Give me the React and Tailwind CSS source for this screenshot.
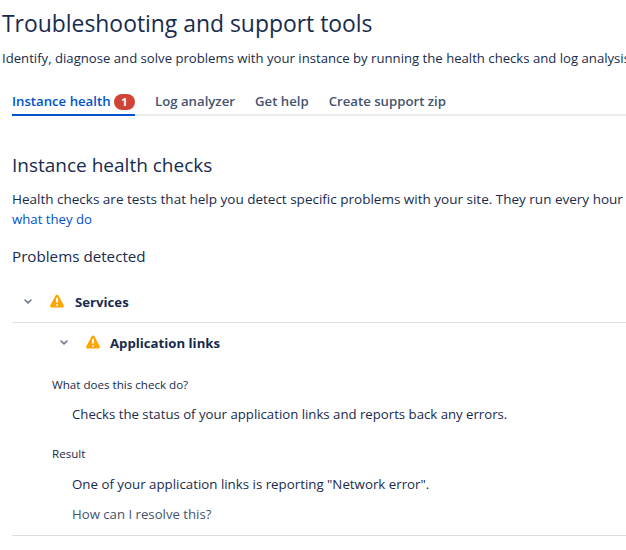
import React from "react";

const Warn = () => (
  <svg width="16" height="16" viewBox="0 0 16 16" className="shrink-0">
    <path d="M6.7 2.2 1.3 12.2c-.6 1.1.2 2.3 1.3 2.3h10.8c1.1 0 1.9-1.2 1.3-2.3L9.3 2.2c-.6-1.1-2-1.1-2.6 0z" fill="#ffa500" />
    <rect x="7" y="4.8" width="2" height="5" rx="1" fill="#ffffff" />
    <circle cx="8" cy="12" r="1.1" fill="#ffffff" />
  </svg>
);
const Chev = () => (
  <svg width="16" height="16" viewBox="0 0 16 16" className="shrink-0">
    <path d="M5 7l3 2.8L11 7" fill="none" stroke="#6b778c" strokeWidth="1.6" strokeLinecap="round" strokeLinejoin="round" />
  </svg>
);

export default function App() {
  return (
    <div className="w-[626px] h-[550px] overflow-hidden bg-white text-[#172b4d] text-[13.2px] font-['Open_Sans','Noto_Sans',sans-serif]">
      <h1 className="pl-[2px] pt-[8px] text-[22.9px] leading-[32px] font-medium whitespace-nowrap">Troubleshooting and support tools</h1>
      <p className="pl-[2px] mt-[8px] leading-[20px] whitespace-nowrap text-[13.15px]">Identify, diagnose and solve problems with your instance by running the health checks and log analysis tools.</p>
      <div className="ml-[12px] mt-[24px] flex items-start gap-[20px] border-b-2 border-[#ebecf0] h-[24px] font-semibold text-[#44546f] whitespace-nowrap">
        <div className="h-[24px] w-[123px] flex justify-between items-start border-b-2 border-[#0052cc] text-[#0052cc]">
          <span>Instance health</span>
          <span className="mt-[2px] h-[16px] w-[21px] text-center rounded-full bg-[#d04437] text-white text-[11px] leading-[16px] font-bold">1</span>
        </div>
        <div>Log analyzer</div>
        <div>Get help</div>
        <div>Create support zip</div>
      </div>
      <div className="pl-[12px]">
        <h2 className="mt-[37px] text-[19px] leading-[24px] font-medium">Instance health checks</h2>
        <p className="mt-[12px] leading-[20px] w-[700px] text-[13.5px]">Health checks are tests that help you detect specific problems with your site. They run every hour and <br /><span className="text-[#0052cc] text-[13.2px]">what they do</span></p>
        <h3 className="mt-[15px] text-[15.2px] leading-[24px] font-medium">Problems detected</h3>
        <div className="mt-[25px] h-[30px] pl-[8px] flex items-start gap-[13px] border-b border-[#dcdfe4] font-bold">
          <Chev /><Warn /><span className="-ml-[3px]">Services</span>
        </div>
        <div className="mt-[11px] pl-[44px] flex items-start gap-[13px] font-bold">
          <Chev /><Warn /><span className="-ml-[4px]">Application links</span>
        </div>
        <div className="mt-[23px] pl-[40px] text-[11.6px] leading-[16px] font-medium">What does this check do?</div>
        <p className="mt-[11px] pl-[60px] leading-[20px]">Checks the status of your application links and reports back any errors.</p>
        <div className="mt-[22px] pl-[40px] text-[11.6px] leading-[16px] font-medium">Result</div>
        <p className="mt-[12px] pl-[60px] leading-[20px] text-[13.3px]">One of your application links is reporting "Network error".</p>
        <p className="mt-[10px] pl-[60px] leading-[20px] text-[#44546f]">How can I resolve this?</p>
        <div className="mt-[11px] border-t border-[#dcdfe4]" />
      </div>
    </div>
  );
}
